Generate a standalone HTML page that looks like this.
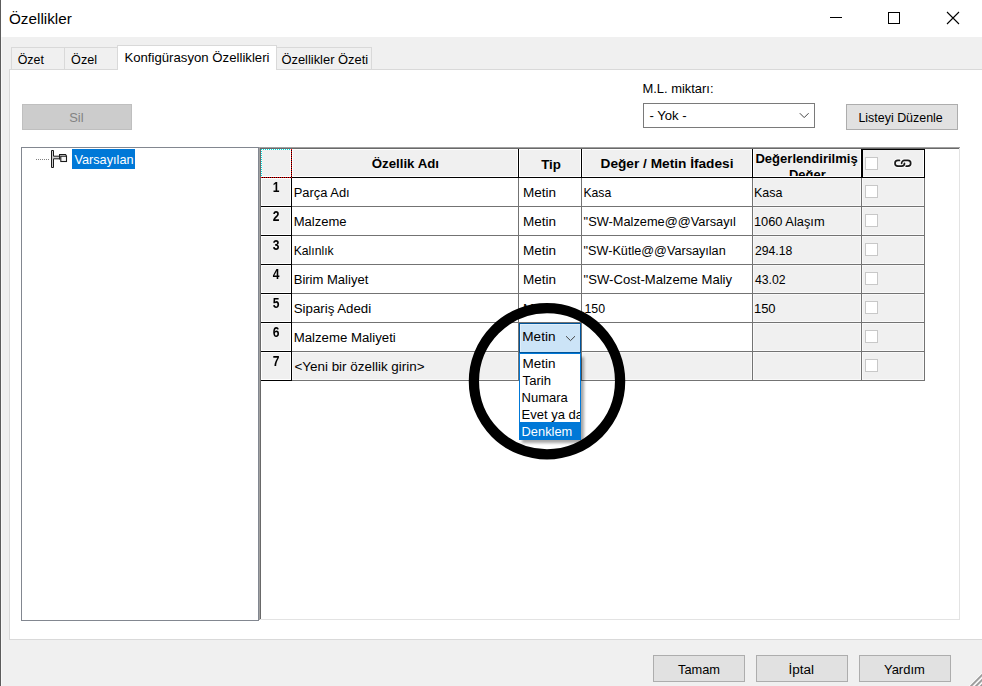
<!DOCTYPE html>
<html><head><meta charset="utf-8">
<style>
*{margin:0;padding:0;box-sizing:border-box}
html,body{width:982px;height:686px;overflow:hidden;background:#f0f0f0}
body{position:relative;font-family:"Liberation Sans",sans-serif;font-size:12.7px;color:#000}
.a{position:absolute}
.t{position:absolute;white-space:nowrap;line-height:20px;height:20px}
</style></head><body>
<div class="a" style="left:0px;top:0px;width:982px;height:37px;background:#fff"></div>
<div class="a" style="left:0px;top:0px;width:1px;height:686px;background:#5c5c5c"></div>
<div class="a" style="left:1px;top:37px;width:1px;height:649px;background:#f8f8f8"></div>
<div class="t" style="left:9.0px;top:9px;font-size:15.27px;">Özellikler</div>
<div class="a" style="left:830px;top:17px;width:12px;height:1px;background:#000"></div>
<div class="a" style="left:888px;top:12px;width:12px;height:12px;border:1px solid #000"></div>
<svg class="a" style="left:946px;top:11px" width="14" height="14" viewBox="0 0 14 14"><path d="M1 1L13 13M13 1L1 13" stroke="#000" stroke-width="1.1"/></svg>
<div class="a" style="left:11px;top:47px;width:54px;height:23px;background:#f0f0f0;border:1px solid #d9d9d9;border-bottom:none"></div>
<div class="a" style="left:64px;top:47px;width:54px;height:23px;background:#f0f0f0;border:1px solid #d9d9d9;border-bottom:none"></div>
<div class="a" style="left:276px;top:47px;width:96px;height:23px;background:#f0f0f0;border:1px solid #d9d9d9;border-bottom:none"></div>
<div class="a" style="left:9px;top:69px;width:990px;height:571px;background:#fff;border:1px solid #d9d9d9"></div>
<div class="a" style="left:117px;top:45px;width:160px;height:25px;background:#fff;border:1px solid #d9d9d9;border-bottom:none"></div>
<div class="t" style="left:17.7px;top:50px;font-size:12.43px;">Özet</div>
<div class="t" style="left:71.1px;top:50px;font-size:12.58px;">Özel</div>
<div class="t" style="left:124.4px;top:48px;font-size:13.2px;">Konfigürasyon Özellikleri</div>
<div class="t" style="left:281.4px;top:50px;font-size:12.92px;">Özellikler Özeti</div>
<div class="a" style="left:22px;top:104px;width:110px;height:26px;background:#cccccc;border:1px solid #bfbfbf"></div>
<div class="t" style="left:21.4px;top:108px;font-size:12.9px;color:#838383;width:110px;text-align:center;">Sil</div>
<div class="t" style="left:642.4px;top:79px;font-size:12.94px;">M.L. miktarı:</div>
<div class="a" style="left:643px;top:103px;width:172px;height:25px;background:#fff;border:1px solid #7a7a7a"></div>
<div class="t" style="left:649.4px;top:106px;font-size:13.1px;">- Yok -</div>
<svg class="a" style="left:799px;top:112px" width="11" height="8" viewBox="0 0 11 8"><path d="M0.8 1.2L5.2 5.6L9.6 1.2" fill="none" stroke="#444" stroke-width="1"/></svg>
<div class="a" style="left:846px;top:104px;width:112px;height:26px;background:#e1e1e1;border:1px solid #adadad"></div>
<div class="t" style="left:844.6px;top:108px;font-size:12.44px;width:112px;text-align:center;">Listeyi Düzenle</div>
<div class="a" style="left:21px;top:147px;width:238px;height:474px;background:#fff;border:1px solid #828790"></div>
<div class="a" style="left:36px;top:159px;width:14px;height:1px;background-image:linear-gradient(90deg,#808080 50%,transparent 50%);background-size:2px 1px"></div>
<svg class="a" style="left:50px;top:149px" width="20" height="20" viewBox="0 0 20 20">
<path d="M1.5 1.5 H3.5 V7.2 H10 V9.8 H3.5 V18.5 H1.5 Z" fill="#cfcfcf" stroke="#1a1a1a" stroke-width="1"/>
<path d="M9.6 10.5 L9.6 5.5 L15.5 5.5 L16.5 6.8" fill="#f4f4f4" stroke="#1a1a1a" stroke-width="1.1"/>
<rect x="10.8" y="7.2" width="5.7" height="5.3" fill="#f4f4f4" stroke="#1a1a1a" stroke-width="1.1"/>
</svg>
<div class="a" style="left:72px;top:149px;width:63px;height:20px;background:#0078d7"></div>
<div class="t" style="left:74.4px;top:150px;font-size:12.72px;color:#fff;">Varsayılan</div>
<div class="a" style="left:259px;top:147px;width:701px;height:473px;background:#fff"></div>
<div class="a" style="left:259px;top:147px;width:701px;height:1px;background:#a0a0a0"></div>
<div class="a" style="left:259px;top:147px;width:1px;height:473px;background:#a0a0a0"></div>
<div class="a" style="left:260px;top:148px;width:699px;height:1px;background:#696969"></div>
<div class="a" style="left:260px;top:148px;width:1px;height:471px;background:#696969"></div>
<div class="a" style="left:959px;top:148px;width:1px;height:472px;background:#e3e3e3"></div>
<div class="a" style="left:260px;top:619px;width:700px;height:1px;background:#e3e3e3"></div>
<div class="a" style="left:261px;top:149px;width:30px;height:28px;background:#f0f0f0;border:1px solid #fff"></div>
<div class="a" style="left:292px;top:149px;width:226px;height:28px;background:#f0f0f0;border:1px solid #fff"></div>
<div class="a" style="left:519px;top:149px;width:62px;height:28px;background:#f0f0f0;border:1px solid #fff"></div>
<div class="a" style="left:582px;top:149px;width:170px;height:28px;background:#f0f0f0;border:1px solid #fff"></div>
<div class="a" style="left:753px;top:149px;width:108px;height:28px;background:#f0f0f0;border:1px solid #fff"></div>
<div class="a" style="left:862px;top:149px;width:62px;height:28px;background:#f0f0f0;border:1px solid #fff"></div>
<div class="a" style="left:261px;top:178px;width:30px;height:28px;background:#f0f0f0;border:1px solid #fff"></div>
<div class="a" style="left:292px;top:178px;width:226px;height:28px;background:#fff"></div>
<div class="a" style="left:519px;top:178px;width:62px;height:28px;background:#fff"></div>
<div class="a" style="left:582px;top:178px;width:170px;height:28px;background:#fff"></div>
<div class="a" style="left:753px;top:178px;width:108px;height:28px;background:#f0f0f0;border:1px solid #f9f9f9"></div>
<div class="a" style="left:862px;top:178px;width:62px;height:28px;background:#f0f0f0;border:1px solid #f9f9f9"></div>
<div class="a" style="left:261px;top:207px;width:30px;height:28px;background:#f0f0f0;border:1px solid #fff"></div>
<div class="a" style="left:292px;top:207px;width:226px;height:28px;background:#fff"></div>
<div class="a" style="left:519px;top:207px;width:62px;height:28px;background:#fff"></div>
<div class="a" style="left:582px;top:207px;width:170px;height:28px;background:#fff"></div>
<div class="a" style="left:753px;top:207px;width:108px;height:28px;background:#f0f0f0;border:1px solid #f9f9f9"></div>
<div class="a" style="left:862px;top:207px;width:62px;height:28px;background:#f0f0f0;border:1px solid #f9f9f9"></div>
<div class="a" style="left:261px;top:236px;width:30px;height:28px;background:#f0f0f0;border:1px solid #fff"></div>
<div class="a" style="left:292px;top:236px;width:226px;height:28px;background:#fff"></div>
<div class="a" style="left:519px;top:236px;width:62px;height:28px;background:#fff"></div>
<div class="a" style="left:582px;top:236px;width:170px;height:28px;background:#fff"></div>
<div class="a" style="left:753px;top:236px;width:108px;height:28px;background:#f0f0f0;border:1px solid #f9f9f9"></div>
<div class="a" style="left:862px;top:236px;width:62px;height:28px;background:#f0f0f0;border:1px solid #f9f9f9"></div>
<div class="a" style="left:261px;top:265px;width:30px;height:28px;background:#f0f0f0;border:1px solid #fff"></div>
<div class="a" style="left:292px;top:265px;width:226px;height:28px;background:#fff"></div>
<div class="a" style="left:519px;top:265px;width:62px;height:28px;background:#fff"></div>
<div class="a" style="left:582px;top:265px;width:170px;height:28px;background:#fff"></div>
<div class="a" style="left:753px;top:265px;width:108px;height:28px;background:#f0f0f0;border:1px solid #f9f9f9"></div>
<div class="a" style="left:862px;top:265px;width:62px;height:28px;background:#f0f0f0;border:1px solid #f9f9f9"></div>
<div class="a" style="left:261px;top:294px;width:30px;height:28px;background:#f0f0f0;border:1px solid #fff"></div>
<div class="a" style="left:292px;top:294px;width:226px;height:28px;background:#fff"></div>
<div class="a" style="left:519px;top:294px;width:62px;height:28px;background:#fff"></div>
<div class="a" style="left:582px;top:294px;width:170px;height:28px;background:#fff"></div>
<div class="a" style="left:753px;top:294px;width:108px;height:28px;background:#f0f0f0;border:1px solid #f9f9f9"></div>
<div class="a" style="left:862px;top:294px;width:62px;height:28px;background:#f0f0f0;border:1px solid #f9f9f9"></div>
<div class="a" style="left:261px;top:323px;width:30px;height:28px;background:#f0f0f0;border:1px solid #fff"></div>
<div class="a" style="left:292px;top:323px;width:226px;height:28px;background:#fff"></div>
<div class="a" style="left:519px;top:323px;width:62px;height:28px;background:#fff"></div>
<div class="a" style="left:582px;top:323px;width:170px;height:28px;background:#fff"></div>
<div class="a" style="left:753px;top:323px;width:108px;height:28px;background:#f0f0f0;border:1px solid #f9f9f9"></div>
<div class="a" style="left:862px;top:323px;width:62px;height:28px;background:#f0f0f0;border:1px solid #f9f9f9"></div>
<div class="a" style="left:261px;top:352px;width:30px;height:28px;background:#f0f0f0;border:1px solid #fff"></div>
<div class="a" style="left:292px;top:352px;width:226px;height:28px;background:#f0f0f0;border:1px solid #f9f9f9"></div>
<div class="a" style="left:519px;top:352px;width:62px;height:28px;background:#f0f0f0;border:1px solid #f9f9f9"></div>
<div class="a" style="left:582px;top:352px;width:170px;height:28px;background:#f0f0f0;border:1px solid #f9f9f9"></div>
<div class="a" style="left:753px;top:352px;width:108px;height:28px;background:#f0f0f0;border:1px solid #f9f9f9"></div>
<div class="a" style="left:862px;top:352px;width:62px;height:28px;background:#f0f0f0;border:1px solid #f9f9f9"></div>
<div class="a" style="left:292px;top:206px;width:633px;height:1px;background:#737373"></div>
<div class="a" style="left:292px;top:235px;width:633px;height:1px;background:#737373"></div>
<div class="a" style="left:292px;top:264px;width:633px;height:1px;background:#737373"></div>
<div class="a" style="left:292px;top:293px;width:633px;height:1px;background:#737373"></div>
<div class="a" style="left:292px;top:322px;width:633px;height:1px;background:#737373"></div>
<div class="a" style="left:292px;top:351px;width:633px;height:1px;background:#737373"></div>
<div class="a" style="left:292px;top:380px;width:633px;height:1px;background:#737373"></div>
<div class="a" style="left:518px;top:178px;width:1px;height:203px;background:#737373"></div>
<div class="a" style="left:581px;top:178px;width:1px;height:203px;background:#737373"></div>
<div class="a" style="left:752px;top:178px;width:1px;height:203px;background:#737373"></div>
<div class="a" style="left:861px;top:178px;width:1px;height:203px;background:#737373"></div>
<div class="a" style="left:924px;top:178px;width:1px;height:203px;background:#737373"></div>
<div class="a" style="left:291px;top:177px;width:634px;height:1px;background:#000"></div>
<div class="a" style="left:518px;top:149px;width:1px;height:29px;background:#000"></div>
<div class="a" style="left:581px;top:149px;width:1px;height:29px;background:#000"></div>
<div class="a" style="left:752px;top:149px;width:1px;height:29px;background:#000"></div>
<div class="a" style="left:861px;top:149px;width:1px;height:29px;background:#000"></div>
<div class="a" style="left:861px;top:149px;width:2px;height:29px;background:#000"></div>
<div class="a" style="left:861px;top:149px;width:64px;height:1px;background:#000"></div>
<div class="a" style="left:924px;top:149px;width:1px;height:29px;background:#000"></div>
<div class="a" style="left:261px;top:206px;width:31px;height:1px;background:#000"></div>
<div class="a" style="left:261px;top:235px;width:31px;height:1px;background:#000"></div>
<div class="a" style="left:261px;top:264px;width:31px;height:1px;background:#000"></div>
<div class="a" style="left:261px;top:293px;width:31px;height:1px;background:#000"></div>
<div class="a" style="left:261px;top:322px;width:31px;height:1px;background:#000"></div>
<div class="a" style="left:261px;top:351px;width:31px;height:1px;background:#000"></div>
<div class="a" style="left:261px;top:380px;width:31px;height:1px;background:#000"></div>
<div class="a" style="left:291px;top:178px;width:1px;height:203px;background:#000"></div>
<div class="a" style="left:261px;top:149px;width:30px;height:1px;background-image:linear-gradient(90deg,#00e0e0 50%,#fff 50%);background-size:2px 1px"></div>
<div class="a" style="left:261px;top:149px;width:1px;height:28px;background-image:linear-gradient(180deg,#00e0e0 50%,#fff 50%);background-size:1px 2px"></div>
<div class="a" style="left:261px;top:177px;width:31px;height:1px;background-image:linear-gradient(90deg,#ff0000 50%,#000 50%);background-size:2px 1px"></div>
<div class="a" style="left:291px;top:149px;width:1px;height:29px;background-image:linear-gradient(180deg,#ff0000 50%,#000 50%);background-size:1px 2px"></div>
<div class="t" style="left:292.4px;top:154px;font-size:13.28px;font-weight:bold;width:226px;text-align:center;">Özellik Adı</div>
<div class="t" style="left:520.0px;top:155px;font-size:13.3px;font-weight:bold;width:62px;text-align:center;">Tip</div>
<div class="t" style="left:582.0px;top:154px;font-size:13.68px;font-weight:bold;width:170px;text-align:center;">Değer / Metin İfadesi</div>
<div class="a" style="left:753px;top:150px;width:108px;height:26px;overflow:hidden">
<div class="t" style="left:2.4px;top:-1px;font-size:13.07px;font-weight:bold;">Değerlendirilmiş</div>
<div class="t" style="left:36.0px;top:15px;font-size:12.95px;font-weight:bold;">Değer</div>
</div>
<div class="a" style="left:865px;top:157px;width:13px;height:13px;background:#fff;border:1px solid #c8c8c8"></div>
<svg class="a" style="left:890px;top:154px" width="26" height="18" viewBox="0 0 26 18">
<g fill="none" stroke-linecap="round" stroke-linejoin="round">
<path d="M9.5 6.4 L7.9 6.4 A2.9 2.9 0 0 0 7.9 12.2 L11.6 12.2 A2.9 2.9 0 0 0 14.5 9.3 M11.6 9.3 A2.9 2.9 0 0 1 14.5 6.4 L17.8 6.4 A2.9 2.9 0 0 1 17.8 12.2 L16.2 12.2" stroke="#fff" stroke-width="4" opacity="0.8"/>
<path d="M9.5 6.4 L7.9 6.4 A2.9 2.9 0 0 0 7.9 12.2 L11.6 12.2 A2.9 2.9 0 0 0 14.5 9.3" stroke="#1a1a1a" stroke-width="1.7"/>
<path d="M11.6 9.3 A2.9 2.9 0 0 1 14.5 6.4 L17.8 6.4 A2.9 2.9 0 0 1 17.8 12.2 L16.2 12.2" stroke="#1a1a1a" stroke-width="1.7"/>
</g></svg>
<div class="t" style="left:261.3px;top:177px;font-size:14.0px;font-weight:bold;width:30px;text-align:center;transform:scaleX(0.86);">1</div>
<div class="t" style="left:293.7px;top:183px;font-size:12.91px;">Parça Adı</div>
<div class="t" style="left:523.0px;top:183px;font-size:13.53px;">Metin</div>
<div class="t" style="left:583.4px;top:183px;font-size:12.22px;">Kasa</div>
<div class="t" style="left:753.9px;top:183px;font-size:12.49px;">Kasa</div>
<div class="a" style="left:865px;top:185px;width:13px;height:13px;background:#fff;border:1px solid #c8c8c8"></div>
<div class="t" style="left:261.3px;top:206px;font-size:14.0px;font-weight:bold;width:30px;text-align:center;transform:scaleX(0.86);">2</div>
<div class="t" style="left:293.7px;top:212px;font-size:13.02px;">Malzeme</div>
<div class="t" style="left:523.0px;top:212px;font-size:13.53px;">Metin</div>
<div class="t" style="left:583.6px;top:212px;font-size:12.8px;">"SW-Malzeme@@Varsayıl</div>
<div class="t" style="left:753.9px;top:212px;font-size:12.85px;">1060 Alaşım</div>
<div class="a" style="left:865px;top:214px;width:13px;height:13px;background:#fff;border:1px solid #c8c8c8"></div>
<div class="t" style="left:261.3px;top:235px;font-size:14.0px;font-weight:bold;width:30px;text-align:center;transform:scaleX(0.86);">3</div>
<div class="t" style="left:293.7px;top:241px;font-size:12.19px;">Kalınlık</div>
<div class="t" style="left:523.0px;top:241px;font-size:13.53px;">Metin</div>
<div class="t" style="left:583.6px;top:241px;font-size:12.65px;">"SW-Kütle@@Varsayılan</div>
<div class="t" style="left:754.9px;top:241px;font-size:12.26px;">294.18</div>
<div class="a" style="left:865px;top:243px;width:13px;height:13px;background:#fff;border:1px solid #c8c8c8"></div>
<div class="t" style="left:261.3px;top:264px;font-size:14.0px;font-weight:bold;width:30px;text-align:center;transform:scaleX(0.86);">4</div>
<div class="t" style="left:293.7px;top:270px;font-size:13.04px;">Birim Maliyet</div>
<div class="t" style="left:523.0px;top:270px;font-size:13.53px;">Metin</div>
<div class="t" style="left:583.6px;top:270px;font-size:13.1px;">"SW-Cost-Malzeme Maliy</div>
<div class="t" style="left:754.9px;top:270px;font-size:12.25px;">43.02</div>
<div class="a" style="left:865px;top:272px;width:13px;height:13px;background:#fff;border:1px solid #c8c8c8"></div>
<div class="t" style="left:261.3px;top:293px;font-size:14.0px;font-weight:bold;width:30px;text-align:center;transform:scaleX(0.86);">5</div>
<div class="t" style="left:293.7px;top:299px;font-size:13.29px;">Sipariş Adedi</div>
<div class="t" style="left:523.0px;top:299px;font-size:13.53px;">Metin</div>
<div class="t" style="left:584.5px;top:299px;font-size:12.37px;">150</div>
<div class="t" style="left:753.9px;top:299px;font-size:13.03px;">150</div>
<div class="a" style="left:865px;top:301px;width:13px;height:13px;background:#fff;border:1px solid #c8c8c8"></div>
<div class="t" style="left:261.3px;top:322px;font-size:14.0px;font-weight:bold;width:30px;text-align:center;transform:scaleX(0.86);">6</div>
<div class="t" style="left:293.7px;top:328px;font-size:13.23px;">Malzeme Maliyeti</div>
<div class="a" style="left:865px;top:330px;width:13px;height:13px;background:#fff;border:1px solid #c8c8c8"></div>
<div class="t" style="left:261.3px;top:351px;font-size:14.0px;font-weight:bold;width:30px;text-align:center;transform:scaleX(0.86);">7</div>
<div class="t" style="left:294.4px;top:357px;font-size:13.45px;">&lt;Yeni bir özellik girin&gt;</div>
<div class="a" style="left:865px;top:359px;width:13px;height:13px;background:#fff;border:1px solid #c8c8c8"></div>
<div class="a" style="left:522px;top:357px;width:62px;height:86px;background:rgba(0,0,0,0.35);filter:blur(1.5px)"></div>
<div class="a" style="left:519px;top:353px;width:62px;height:87px;background:#fff;border:1px solid #0078d7"></div>
<div class="a" style="left:519px;top:422px;width:62px;height:18px;background:#0078d7"></div>
<div class="a" style="left:520px;top:353px;width:60px;height:86px;overflow:hidden">
<div class="t" style="left:2.4px;top:1px;font-size:13.5px;">Metin</div>
<div class="t" style="left:2.6px;top:18px;font-size:13.08px;">Tarih</div>
<div class="t" style="left:1.6px;top:35px;font-size:13.0px;">Numara</div>
<div class="t" style="left:1.6px;top:52px;font-size:13.0px;">Evet ya da</div>
<div class="t" style="left:1.6px;top:69px;font-size:12.84px;color:#fff;">Denklem</div>
</div>
<div class="a" style="left:519px;top:323px;width:62px;height:30px;background:#cce4f7;border:1px solid #005499"></div>
<div class="a" style="left:520px;top:324px;width:60px;height:28px;border:1px solid #e0eefa;border-right:none;border-bottom:none"></div>
<div class="t" style="left:522.3px;top:327px;font-size:13.58px;">Metin</div>
<svg class="a" style="left:565px;top:335px" width="11" height="8" viewBox="0 0 11 8"><path d="M1 1.2L5.5 5.6L10 1.2" fill="none" stroke="#444" stroke-width="1"/></svg>
<svg class="a" style="left:0;top:0" width="982" height="686"><circle cx="547" cy="381.3" r="73.1" fill="none" stroke="#000" stroke-width="10.3"/></svg>
<div class="a" style="left:653px;top:655px;width:92px;height:27px;background:#e1e1e1;border:1px solid #adadad"></div>
<div class="t" style="left:653.0px;top:660px;font-size:12.83px;width:92px;text-align:center;">Tamam</div>
<div class="a" style="left:756px;top:655px;width:92px;height:27px;background:#e1e1e1;border:1px solid #adadad"></div>
<div class="t" style="left:755.2px;top:660px;font-size:13.53px;width:92px;text-align:center;">İptal</div>
<div class="a" style="left:859px;top:655px;width:92px;height:27px;background:#e1e1e1;border:1px solid #adadad"></div>
<div class="t" style="left:858.4px;top:660px;font-size:12.99px;width:92px;text-align:center;">Yardım</div>
<svg class="a" style="left:955px;top:660px" width="27" height="26" viewBox="0 0 27 26"><path d="M13.6 27L28 12.6M18.6 27L28 17.6M23.6 27L28 22.6" stroke="#fff" stroke-width="1.2"/><path d="M15 27L28 14M20 27L28 19M25 27L28 24" stroke="#9a9a9a" stroke-width="1.8"/></svg>
</body></html>
